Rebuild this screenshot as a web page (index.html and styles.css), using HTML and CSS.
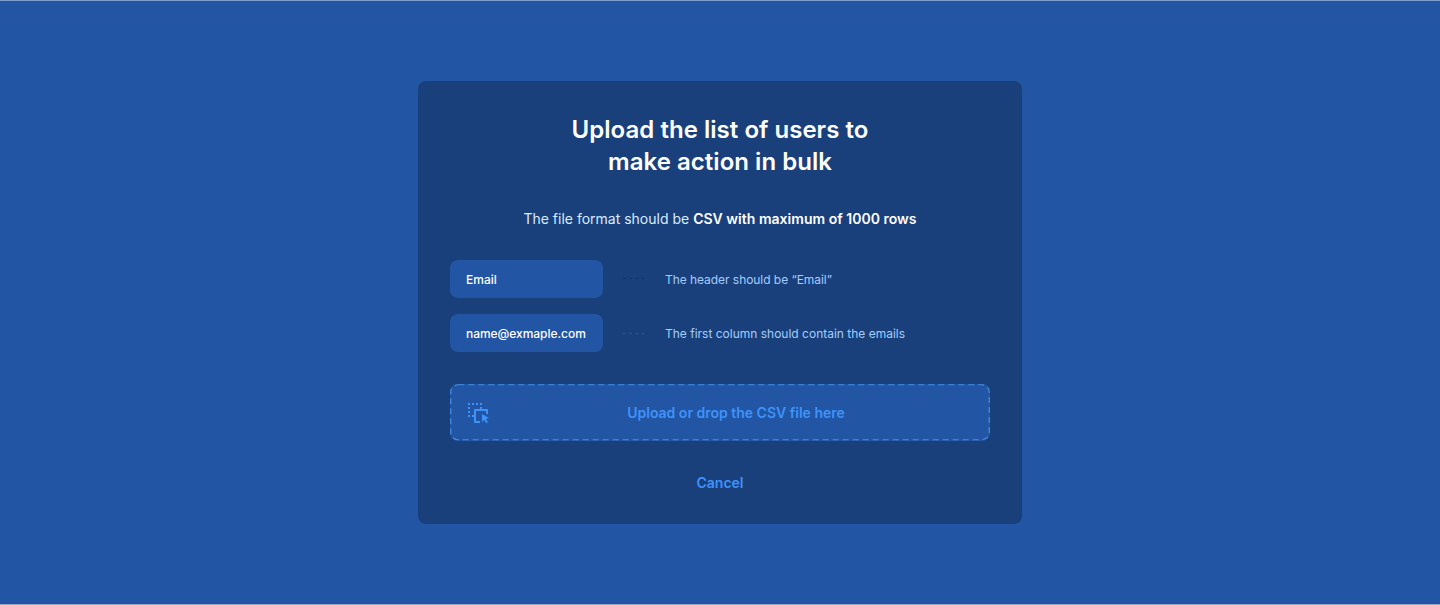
FILE: index.html
```html
<!DOCTYPE html>
<html lang="en">
<head>
<meta charset="utf-8">
<title>Bulk upload</title>
<link rel="stylesheet" href="styles.css">
</head>
<body>
<main class="page">
  <section class="card">
    <h1 class="title"><span>Upload the list of users to</span><span>make action in bulk</span></h1>
    <p class="format"><span>The file format should be</span> <strong>CSV with maximum of 1000 rows</strong></p>
    <div class="rules">
      <div class="rule">
        <div class="cell">Email</div>
        <svg class="dots dots-dark" width="22" height="2"><path d="M0 .5H22" stroke-dasharray="3 3.2"/></svg>
        <span class="hint hint-header">The header should be “Email”</span>
      </div>
      <div class="rule">
        <div class="cell cell-email">name@exmaple.com</div>
        <svg class="dots" width="22" height="2"><path d="M0 1.5H22" stroke-dasharray="3 3.2"/></svg>
        <span class="hint">The first column should contain the emails</span>
      </div>
    </div>
    <div class="drop">
      <svg class="drop-outline" width="540" height="57"><rect x=".75" y=".75" width="538.5" height="55" rx="7.5"/></svg>
      <svg class="drop-icon" width="24" height="24" viewBox="0 0 24 24"><path d="M16 13L22.964 17.062L19.994 17.911L21.868 21.156L20.136 22.156L18.262 18.911L16.041 21.058L16 13ZM14 6H16V8H21C21.5523 8 22 8.44772 22 9V13H20V10H10V20H14V22H9C8.44772 22 8 21.5523 8 21V16H6V14H8V9C8 8.44772 8.44772 8 9 8H14V6ZM4 14V16H2V14H4ZM4 10V12H2V10H4ZM4 6V8H2V6H4ZM4 2V4H2V2H4ZM8 2V4H6V2H8ZM12 2V4H10V2H12ZM16 2V4H14V2H16Z"/></svg>
      <span class="drop-label">Upload or drop the CSV file here</span>
    </div>
    <div class="cancel">Cancel</div>
  </section>
</main>
</body>
</html>
```
FILE: styles.css
```css
* { box-sizing: border-box; }
body { margin: 0; font-family: Inter, sans-serif; }
.page {
  height: 605px;
  display: flex;
  justify-content: center;
  align-items: center;
  background: #2255a4;
  border-top: 1px solid #7f9fce;
  border-bottom: 1px solid #90abd6;
}
.card {
  width: 604px;
  height: 443px;
  padding: 33px 32px 24px;
  border-radius: 8px;
  background: #1a407c;
  display: flex;
  flex-direction: column;
}
.title {
  margin: 0;
  display: flex;
  flex-direction: column;
  align-items: center;
  font-size: 24px;
  line-height: 32px;
  font-weight: 600;
  letter-spacing: 0.03px;
  color: #fff;
}
.format {
  margin: 29px 0 0;
  text-align: center;
  font-size: 14px;
  line-height: 24px;
  color: #d8ecff;
}
.format strong { font-weight: 600; letter-spacing: 0.02px; color: #fff; }
.rules {
  margin-top: 29px;
  display: flex;
  flex-direction: column;
  gap: 16px;
}
.rule { display: flex; align-items: center; height: 38px; }
.cell {
  width: 153px;
  height: 38px;
  padding: 1px 0 0 16px;
  border-radius: 8px;
  background: #2255a4;
  color: #fff;
  font-size: 12px;
  line-height: 38px;
  font-weight: 500;
}
.cell-email { letter-spacing: -0.04px; }
.dots { margin: 0 20px; fill: none; stroke: #2b5590; stroke-width: 1; }
.dots-dark { stroke: #123068; }
.hint { padding-top: 1px; font-size: 12px; line-height: 18px; color: #a3cdfc; }
.hint-header { letter-spacing: -0.05px; }
.drop {
  position: relative;
  flex-shrink: 0;
  margin-top: 32px;
  height: 57px;
  padding: 0 8px 0 16px;
  border-radius: 8px;
  background: #2255a4;
  display: flex;
  align-items: center;
}
.drop-outline {
  position: absolute;
  inset: 0;
  fill: none;
  stroke: #4390e6;
  stroke-width: 1.2;
  stroke-dasharray: 6 4;
}
.drop-icon { margin-top: 1px; fill: #3e93fa; }
.drop-label {
  flex: 1;
  padding-top: 1px;
  text-align: center;
  color: #3e93fa;
  font-size: 14px;
  line-height: 24px;
  font-weight: 600;
}
.cancel {
  margin-top: 30px;
  text-align: center;
  color: #3e93fa;
  font-size: 14px;
  line-height: 24px;
  font-weight: 600;
}
```
